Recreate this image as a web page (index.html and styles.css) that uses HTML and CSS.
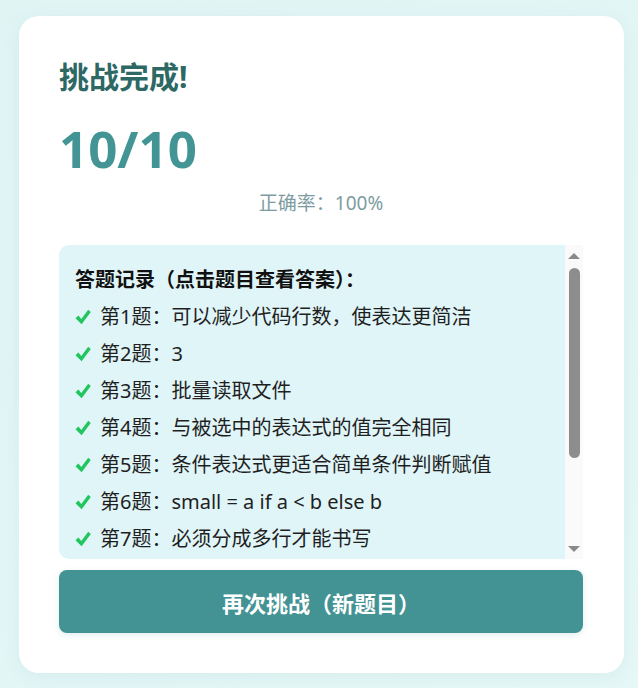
FILE: index.html
```html
<!DOCTYPE html>
<html lang="zh-CN">
<head>
<meta charset="utf-8">
<title>挑战完成</title>
<link rel="stylesheet" href="styles.css">
</head>
<body>
<main class="card">
  <h1 class="title">挑战完成!</h1>
  <div class="score">10/10</div>
  <div class="rate">正确率：100%</div>
  <section class="records">
    <div class="records-body">
      <div class="records-head">答题记录（点击题目查看答案）：</div>
      <ul class="record-list">
        <li class="record"><svg class="check" viewBox="0 0 16 16"><path d="M0.5 9.2 L3.4 6.6 L6.3 10.1 L13.2 0.8 L15.8 3 L6.6 15.2 Z"/></svg><span>第1题：可以减少代码行数，使表达更简洁</span></li>
        <li class="record"><svg class="check" viewBox="0 0 16 16"><path d="M0.5 9.2 L3.4 6.6 L6.3 10.1 L13.2 0.8 L15.8 3 L6.6 15.2 Z"/></svg><span>第2题：3</span></li>
        <li class="record"><svg class="check" viewBox="0 0 16 16"><path d="M0.5 9.2 L3.4 6.6 L6.3 10.1 L13.2 0.8 L15.8 3 L6.6 15.2 Z"/></svg><span>第3题：批量读取文件</span></li>
        <li class="record"><svg class="check" viewBox="0 0 16 16"><path d="M0.5 9.2 L3.4 6.6 L6.3 10.1 L13.2 0.8 L15.8 3 L6.6 15.2 Z"/></svg><span>第4题：与被选中的表达式的值完全相同</span></li>
        <li class="record"><svg class="check" viewBox="0 0 16 16"><path d="M0.5 9.2 L3.4 6.6 L6.3 10.1 L13.2 0.8 L15.8 3 L6.6 15.2 Z"/></svg><span>第5题：条件表达式更适合简单条件判断赋值</span></li>
        <li class="record"><svg class="check" viewBox="0 0 16 16"><path d="M0.5 9.2 L3.4 6.6 L6.3 10.1 L13.2 0.8 L15.8 3 L6.6 15.2 Z"/></svg><span>第6题：small = a if a &lt; b else b</span></li>
        <li class="record"><svg class="check" viewBox="0 0 16 16"><path d="M0.5 9.2 L3.4 6.6 L6.3 10.1 L13.2 0.8 L15.8 3 L6.6 15.2 Z"/></svg><span>第7题：必须分成多行才能书写</span></li>
      </ul>
    </div>
    <div class="scrollbar" aria-hidden="true">
      <svg class="arrow" viewBox="0 0 12 6"><path d="M0 6 L6 0 L12 6 Z"/></svg>
      <div class="thumb"></div>
      <div class="spacer"></div>
      <svg class="arrow" viewBox="0 0 12 6"><path d="M0 0 L12 0 L6 6 Z"/></svg>
    </div>
  </section>
  <button class="retry">再次挑战（新题目）</button>
</main>
</body>
</html>
```
FILE: styles.css
```css
html, body {
  margin: 0;
  padding: 0;
}
body {
  min-height: 688px;
  background: linear-gradient(135deg, #e0f4f4 0%, #e6f7f7 100%);
  font-family: "Noto Sans", "Noto Sans CJK SC", sans-serif;
  padding: 16px 14px 14px 19px;
  box-sizing: border-box;
}
.card {
  background: #ffffff;
  border-radius: 20px;
  padding: 40px 41px 40px 40px;
  box-shadow: 0 4px 18px rgba(60, 140, 140, 0.08);
  display: flex;
  flex-direction: column;
}
.title {
  margin: 0;
  font-size: 30px;
  line-height: 42px;
  font-weight: 700;
  color: #2d6864;
}
.score {
  margin-top: 16px;
  font-size: 51px;
  line-height: 68px;
  font-weight: 700;
  color: #439494;
}
.rate {
  margin-top: 7px;
  text-align: center;
  font-size: 19px;
  line-height: 28px;
  color: #7d9ca2;
}
.records {
  margin-top: 28px;
  height: 314px;
  display: flex;
  border-radius: 10px 0 0 10px;
  overflow: hidden;
}
.records-body {
  flex: 1;
  background: #e0f5f7;
  padding: 20px 16px 0 16px;
  overflow: hidden;
}
.records-head {
  font-size: 20px;
  line-height: 29px;
  font-weight: 700;
  color: #111;
  white-space: nowrap;
}
.record-list {
  list-style: none;
  margin: 8px 0 0;
  padding: 0;
  display: flex;
  flex-direction: column;
  gap: 8px;
}
.record {
  display: flex;
  align-items: center;
  gap: 9px;
  font-size: 20px;
  line-height: 29px;
  color: #1f1f1f;
  white-space: nowrap;
}
.check {
  width: 16px;
  height: 16px;
  flex: none;
  fill: #22c55e;
}
.scrollbar {
  width: 18px;
  flex: none;
  background: #fafafa;
  display: flex;
  flex-direction: column;
  align-items: center;
  padding: 8px 0 7px;
  box-sizing: border-box;
}
.arrow {
  width: 12px;
  height: 6px;
  fill: #8a8a8a;
  flex: none;
}
.thumb {
  margin-top: 9px;
  width: 11px;
  height: 190px;
  border-radius: 6px;
  background: #8d8d8d;
  flex: none;
}
.spacer {
  flex: 1;
}
.retry {
  margin-top: 11px;
  height: 63px;
  border: none;
  border-radius: 8px;
  background: #449394;
  color: #ffffff;
  font-family: "Noto Sans", "Noto Sans CJK SC", sans-serif;
  font-size: 22px;
  font-weight: 700;
  box-shadow: 0 2px 6px rgba(60, 140, 140, 0.15);
}
```
